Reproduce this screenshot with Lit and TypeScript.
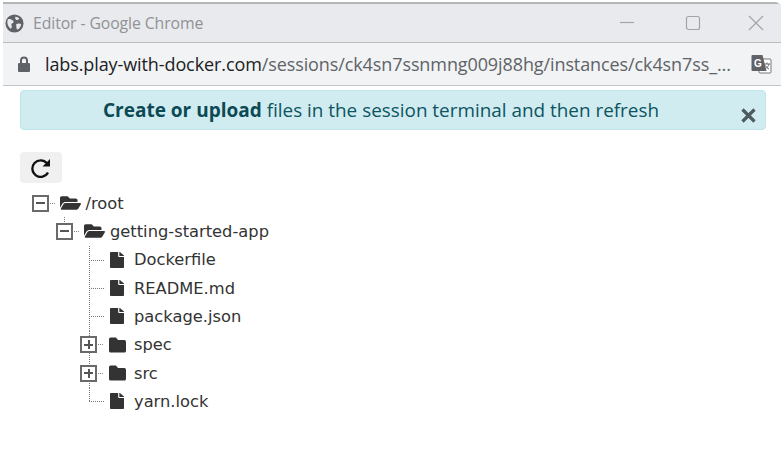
import { LitElement, html, css, svg } from 'lit';
import { customElement } from 'lit/decorators.js';

type Row = { name: string; depth: number; kind: 'open' | 'closed' | 'file'; toggle?: string };

const rows: Row[] = [
  { name: '/root', depth: 0, kind: 'open', toggle: 'minus' },
  { name: 'getting-started-app', depth: 1, kind: 'open', toggle: 'minus' },
  { name: 'Dockerfile', depth: 2, kind: 'file' },
  { name: 'README.md', depth: 2, kind: 'file' },
  { name: 'package.json', depth: 2, kind: 'file' },
  { name: 'spec', depth: 2, kind: 'closed', toggle: 'plus' },
  { name: 'src', depth: 2, kind: 'closed', toggle: 'plus' },
  { name: 'yarn.lock', depth: 2, kind: 'file' },
];

const fileIcon = svg`<path d="M224 136V0H24C10.700 0 0 10.700 0 24v464c0 13.300 10.700 24 24 24h336c13.300 0 24-10.700 24-24V160H248c-13.200 0-24-10.800-24-24zm160-14.100v6.100H256V0h6.100c6.400 0 12.500 2.500 17 7l97.900 98c4.500 4.500 7 10.600 7 16.900z"/>`;
const folderIcon = svg`<path d="M464 128H272l-64-64H48C21.490 64 0 85.490 0 112v288c0 26.510 21.490 48 48 48h416c26.510 0 48-21.490 48-48V176c0-26.510-21.490-48-48-48z"/>`;
const openIcon = svg`<path d="M572.694 292.093L500.270 416.248A63.997 63.997 0 0 1 444.989 448H45.025c-18.523 0-30.064-20.093-20.731-36.093l72.424-124.155A64 64 0 0 1 152 256h399.964c18.523 0 30.064 20.093 20.730 36.093zM152 224h328v-48c0-26.510-21.490-48-48-48H272l-64-64H48C21.490 64 0 85.490 0 112v278.046l69.077-118.418C86.214 242.250 117.989 224 152 224z"/>`;

@customElement('app-root')
export class AppRoot extends LitElement {
  static styles = css`
    :host {
      display: block;
      width: 781px;
      height: 460px;
      background: #fff;
      overflow: hidden;
    }
    .chrome {
      margin: 2px 0 0 3px;
      border-top: 2px solid #b4b5b7;
      border-top-right-radius: 6px;
    }
    .title {
      height: 38px;
      background: #e8eaed;
      border-bottom: 1px solid #bcbdbf;
      display: flex;
      align-items: center;
      padding-left: 2px;
      color: #909295;
      font: 15.800px 'Open Sans', sans-serif;
    }
    .globe { width: 19px; height: 19px; margin-right: 9px; }
    .title-text { flex: 1; letter-spacing: -0.1px; }
    .win { display: flex; align-items: center; }
    .win svg { width: 16px; height: 16px; fill: none; stroke: #a2a4a7; stroke-width: 1.2; }
    .win .min { margin-right: 50px; }
    .win .max { margin-right: 47px; }
    .win .close { margin-right: 17px; }
    .address {
      height: 42px;
      background: #f1f3f4;
      border-bottom: 1px solid #c4c5c7;
      display: flex;
      align-items: center;
      padding-left: 15px;
      font: 18px 'Open Sans', sans-serif;
      color: #5f6368;
      white-space: nowrap;
    }
    .lock { width: 12px; height: 16px; fill: #5f6368; margin-right: 15px; flex: none; }
    .host { color: #202124; }
    .url { flex: 1; overflow: hidden; letter-spacing: -0.1px; }
    .translate { width: 21px; height: 21px; margin: 0 9px 0 9px; flex: none; }
    .alert {
      margin: 4px 15px 0 20px;
      height: 38px;
      background: #d1ecf1;
      border: 1px solid #bee5eb;
      border-radius: 4px;
      color: #0c5460;
      font: 18.900px 'Open Sans', sans-serif;
      display: flex;
      align-items: center;
      justify-content: center;
      padding-right: 24px;
      position: relative;
    }
    .alert b { font-weight: 700; color: #0b4a54; font-size: 19px; }
    .x {
      position: absolute;
      right: 9px;
      top: 17px;
      width: 15px;
      height: 15px;
      stroke: #4d5a5e;
      stroke-width: 3.200;
    }
    .refresh {
      margin: 22px 0 0 20px;
      width: 42px;
      height: 31px;
      border-radius: 4px;
      background: #f0f0f0;
      display: flex;
      align-items: center;
      justify-content: center;
    }
    .refresh svg { width: 20px; height: 20px; }
    .tree {
      margin: 6px 0 0 0;
      padding: 0;
      list-style: none;
      font: 16.300px 'DejaVu Sans', sans-serif;
      color: #333;
    }
    .row {
      height: 28.330px;
      display: flex;
      align-items: center;
      position: relative;
    }
    .spine {
      position: absolute;
      width: 0;
      border-left: 1px dotted #777;
    }
    .hook {
      position: absolute;
      left: 89px;
      width: 15px;
      height: 0;
      top: 14px;
      border-top: 1px dotted #777;
    }
    .d0 { padding-left: 31.500px; }
    .d1 { padding-left: 56px; }
    .d2 { padding-left: 80px; }
    .box {
      width: 13px;
      height: 13px;
      border: 2px solid #6a6a6a;
      background: #fff;
      position: relative;
      flex: none;
      z-index: 1;
    }
    .box::before {
      content: '';
      position: absolute;
      left: 2px;
      right: 2px;
      top: 5.500px;
      height: 2px;
      background: #555;
    }
    .box.plus::after {
      content: '';
      position: absolute;
      top: 2px;
      bottom: 2px;
      left: 5.500px;
      width: 2px;
      background: #555;
    }
    .dots {
      width: 5px;
      margin: 0 6px 0 1px;
      border-top: 1px dotted #888;
      flex: none;
    }
    .lead { width: 30px; flex: none; }
    .icon { fill: #333; flex: none; }
    .icon.file { width: 14px; height: 16px; margin-right: 10px; }
    .icon.closed { width: 17px; height: 20px; margin-right: 8px; }
    .icon.open { width: 21px; height: 18px; margin-right: 5px; margin-left: -1px; }
    .label { white-space: nowrap; }
  `;

  private renderRow(r: Row, i: number) {
    const last = i === rows.length - 1;
    const spine = r.depth === 2
      ? html`<span class="spine" style="left:89px;top:0;height:${last ? 14 : 29}px"></span>`
      : i === 1
        ? html`<span class="spine" style="left:64px;top:0;height:7px"></span>`
        : '';
    const viewBox = r.kind === 'file' ? '0 0 384 512' : r.kind === 'closed' ? '0 0 512 512' : '0 0 576 512';
    return html`
      <li class="row d${r.depth}">
        ${spine}
        ${r.toggle
          ? html`<span class="box ${r.toggle}"></span><span class="dots"></span>`
          : html`<span class="lead"></span><span class="hook"></span>`}
        <svg class="icon ${r.kind}" viewBox=${viewBox} preserveAspectRatio="none">
          ${r.kind === 'file' ? fileIcon : r.kind === 'closed' ? folderIcon : openIcon}
        </svg>
        <span class="label">${r.name}</span>
      </li>
    `;
  }

  render() {
    return html`
      <div class="chrome">
        <div class="title">
          <svg class="globe" viewBox="0 0 20 20">
            <circle cx="10" cy="10" r="9.500" fill="#5f6368" />
            <path fill="#e8eaed" d="M3 5.500c2-.5 4 .3 5.500 1.500 1 1 .5 2.500-.8 2.800-1 .2-1.200 1.500-.7 2.500.5 1.200 0 2.500-1 3.200-2-1.500-3.500-4-3.500-6.500 0-1.300.1-2.500.5-3.500zM11 3c1.500.1 3 .8 4 1.800-.5 1.200-2 1.700-3.200 1.200-1-.4-1.500-2-.8-3zM12 10.500c1.500-.8 3.500-.8 5 0-.2 2.500-1.500 4.500-3.500 5.800-1.200-.3-1.700-1.700-1.500-3 .1-1-.5-2 0-2.800z" />
          </svg>
          <span class="title-text">Editor - Google Chrome</span>
          <div class="win">
            <svg class="min" viewBox="0 0 16 16"><path d="M1 7.500h14" /></svg>
            <svg class="max" viewBox="0 0 16 16"><rect x="1.500" y="1.500" width="13" height="13" rx="2" /></svg>
            <svg class="close" viewBox="0 0 16 16"><path d="M1 1l14 14M15 1L1 15" /></svg>
          </div>
        </div>
        <div class="address">
          <svg class="lock" viewBox="0 0 12 16">
            <path d="M2 7V4.500a4 4 0 0 1 8 0V7h1a1 1 0 0 1 1 1v7a1 1 0 0 1-1 1H1a1 1 0 0 1-1-1V8a1 1 0 0 1 1-1zm2 0h4V4.500a2 2 0 0 0-4 0z" />
          </svg>
          <span class="url"><span class="host">labs.play-with-docker.com</span>/sessions/ck4sn7ssnmng009j88hg/instances/ck4sn7ss_...</span>
          <svg class="translate" viewBox="0 0 21 21">
            <rect x="8" y="5" width="12" height="14" rx="1" fill="#fff" stroke="#777" />
            <path d="M1.500 1h10l4 16H1.500a1 1 0 0 1-1-1V2a1 1 0 0 1 1-1z" fill="#5f6368" />
            <text x="3" y="13" font-family="'Liberation Sans', sans-serif" font-size="10" font-weight="700" fill="#fff">G</text>
            <path d="M13 10h6M16 8.500V10M18 10c-.5 2-2 4-4 5M14.500 11.500c.7 1.500 2 3 3.500 3.500" fill="none" stroke="#666" stroke-width="1" />
          </svg>
        </div>
      </div>
      <div class="alert">
        <span><b>Create or upload</b> files in the session terminal and then refresh</span>
        <svg class="x" viewBox="0 0 15 15"><path d="M1.500 1.500l12 12M13.500 1.500l-12 12" /></svg>
      </div>
      <div class="refresh">
        <svg viewBox="0 0 20 20">
          <path d="M16 5.200A8.300 8.300 0 1 0 17 14.500" fill="none" stroke="#111" stroke-width="2.300" />
          <path d="M19 1v7.500h-7.500z" fill="#111" />
        </svg>
      </div>
      <ul class="tree">${rows.map((r, i) => this.renderRow(r, i))}</ul>
    `;
  }
}
